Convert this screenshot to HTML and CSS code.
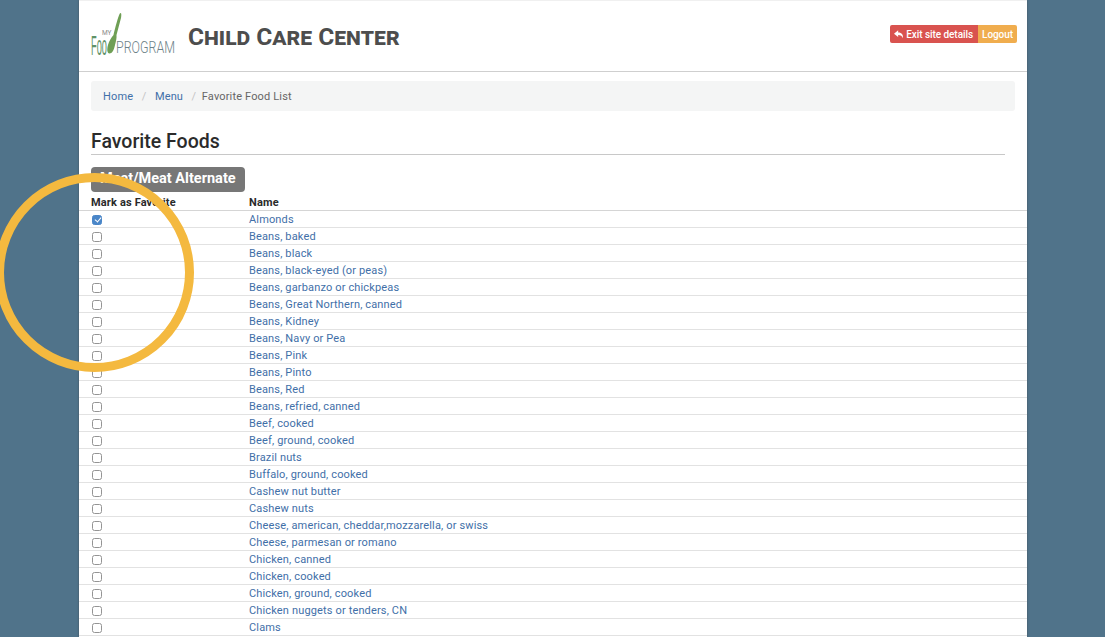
FILE: index.html
```html
<!DOCTYPE html>
<html lang="en">
<head>
<meta charset="utf-8">
<title>Favorite Foods</title>
<link rel="stylesheet" href="styles.css">
</head>
<body>
<div class="page">
  <header class="top">
    <div class="brand">
      <svg class="logo" viewBox="0 0 84 44" width="84" height="44" aria-hidden="true">
        <path class="spoon" d="M29.500 0 C30.500 0 30.500 2 30 5 L25.500 22 C25.800 25 25 28 24 32 C23 37 21 40.500 18.500 40.500 C16 40.500 15.800 36 17 32 C18 28 20 25 22.500 22 C24.500 14 28 0 29.500 0 Z"/>
        <text class="logo-my" transform="translate(11 22)">MY</text>
        <text class="logo-food" transform="translate(0 42) scale(.33 1)">Foo</text>
        <text class="logo-program" transform="translate(25 40) scale(.77 1)" textLength="76.600" lengthAdjust="spacingAndGlyphs">PROGRAM</text>
      </svg>
      <h1 class="site-title">Child Care Center</h1>
    </div>
    <div class="actions">
      <a class="btn btn-exit" href="#">
        <svg class="reply" viewBox="0 0 12 10" width="10" height="9" aria-hidden="true"><path d="M5 0 L0 4 L5 8 V5.500 C8 5.500 9.700 6.500 10.500 9.500 C11.500 5.500 9.500 2.500 5 2.500 Z"/></svg>
        Exit site details
      </a><a class="btn btn-logout" href="#">Logout</a>
    </div>
  </header>

  <nav class="crumbs">
    <a href="#">Home</a><span class="sep">/</span><a href="#">Menu</a><span class="sep">/</span><span class="current">Favorite Food List</span>
  </nav>

  <h2 class="section-title">Favorite Foods</h2>
  <span class="group-label">Meat/Meat Alternate</span>

  <table class="foods">
    <thead>
      <tr><th class="col-mark">Mark as Favorite</th><th>Name</th></tr>
    </thead>
    <tbody>
      <tr><td><input type="checkbox" checked></td><td><a href="#">Almonds</a></td></tr>
      <tr><td><input type="checkbox"></td><td><a href="#">Beans, baked</a></td></tr>
      <tr><td><input type="checkbox"></td><td><a href="#">Beans, black</a></td></tr>
      <tr><td><input type="checkbox"></td><td><a href="#">Beans, black-eyed (or peas)</a></td></tr>
      <tr><td><input type="checkbox"></td><td><a href="#">Beans, garbanzo or chickpeas</a></td></tr>
      <tr><td><input type="checkbox"></td><td><a href="#">Beans, Great Northern, canned</a></td></tr>
      <tr><td><input type="checkbox"></td><td><a href="#">Beans, Kidney</a></td></tr>
      <tr><td><input type="checkbox"></td><td><a href="#">Beans, Navy or Pea</a></td></tr>
      <tr><td><input type="checkbox"></td><td><a href="#">Beans, Pink</a></td></tr>
      <tr><td><input type="checkbox"></td><td><a href="#">Beans, Pinto</a></td></tr>
      <tr><td><input type="checkbox"></td><td><a href="#">Beans, Red</a></td></tr>
      <tr><td><input type="checkbox"></td><td><a href="#">Beans, refried, canned</a></td></tr>
      <tr><td><input type="checkbox"></td><td><a href="#">Beef, cooked</a></td></tr>
      <tr><td><input type="checkbox"></td><td><a href="#">Beef, ground, cooked</a></td></tr>
      <tr><td><input type="checkbox"></td><td><a href="#">Brazil nuts</a></td></tr>
      <tr><td><input type="checkbox"></td><td><a href="#">Buffalo, ground, cooked</a></td></tr>
      <tr><td><input type="checkbox"></td><td><a href="#">Cashew nut butter</a></td></tr>
      <tr><td><input type="checkbox"></td><td><a href="#">Cashew nuts</a></td></tr>
      <tr><td><input type="checkbox"></td><td><a href="#">Cheese, american, cheddar,mozzarella, or swiss</a></td></tr>
      <tr><td><input type="checkbox"></td><td><a href="#">Cheese, parmesan or romano</a></td></tr>
      <tr><td><input type="checkbox"></td><td><a href="#">Chicken, canned</a></td></tr>
      <tr><td><input type="checkbox"></td><td><a href="#">Chicken, cooked</a></td></tr>
      <tr><td><input type="checkbox"></td><td><a href="#">Chicken, ground, cooked</a></td></tr>
      <tr><td><input type="checkbox"></td><td><a href="#">Chicken nuggets or tenders, CN</a></td></tr>
      <tr><td><input type="checkbox"></td><td><a href="#">Clams</a></td></tr>
    </tbody>
  </table>
</div>
<div class="ring" aria-hidden="true"></div>
</body>
</html>
```

FILE: styles.css
```css
* { box-sizing: border-box; }
html, body { height: 100%; }
body {
  margin: 0;
  height: 637px;
  overflow: hidden;
  background: #50738a;
  font-family: Roboto, "Liberation Sans", sans-serif;
  font-size: 11px;
  letter-spacing: .15px;
  color: #333;
  position: relative;
}
a { color: #3f6fa8; text-decoration: none; }

.page {
  width: 948px;
  height: 637px;
  margin-left: 79px;
  background: #fff;
  overflow: hidden;
  box-shadow: 0 0 2px rgba(60, 60, 60, .6);
  border-top: 1px solid #f0f0f0;
}

.top {
  height: 71px;
  border-bottom: 1px solid #cfcfcf;
  display: flex;
  justify-content: space-between;
  padding: 12px 10px 0 12px;
}
.brand { display: flex; align-items: flex-start; }
.logo { display: block; overflow: visible; }
.spoon { fill: #6f9f55; }
.logo-my { font: 6.500px Roboto, sans-serif; fill: #8a8a8a; letter-spacing: 0; }
.logo-food { font: 28px "Liberation Sans", sans-serif; fill: #5f9268; letter-spacing: 0; }
.logo-program { font: 300 17px Roboto, sans-serif; fill: #6d8288; letter-spacing: 0; }
.site-title {
  margin: 6px 0 0 13px;
  font-size: 24.500px;
  line-height: 36px;
  font-weight: 700;
  font-variant: small-caps;
  letter-spacing: 0;
  color: #4d4d4d;
}
.actions { display: flex; align-items: flex-start; padding-top: 12px; }
.btn {
  display: inline-flex;
  align-items: center;
  gap: 2px;
  height: 18px;
  padding: 0 5px;
  color: #fff;
  font-size: 10px;
  font-weight: 500;
  letter-spacing: -.06px;
  white-space: nowrap;
}
.btn-exit { background: #d9534f; border-radius: 2px 0 0 2px; padding: 0 5px 0 4px; }
.btn-logout { background: #f0ad4e; border-radius: 0 2px 2px 0; padding: 0 4px; }
.reply { fill: #fff; }

.crumbs {
  margin: 9px 12px 0;
  height: 30px;
  padding: 0 12px;
  background: #f4f5f5;
  border-radius: 3px;
  display: flex;
  align-items: center;
  font-size: 11px;
}
.sep { color: #c4c4c4; padding: 0 8.500px; }
.current { color: #666; margin-left: -3px; }

.section-title {
  margin: 18px 22px 0 12px;
  height: 26px;
  padding-top: 1px;
  border-bottom: 1px solid #c8c8c8;
  font-size: 19.500px;
  line-height: 24px;
  font-weight: 500;
  letter-spacing: 0;
  color: #2b2b2b;
}
.group-label {
  display: table;
  margin: 12px 0 0 12px;
  height: 25px;
  padding: 0 9px;
  background: #777;
  border-radius: 4px;
  color: #fff;
  font-size: 14.500px;
  font-weight: 700;
  letter-spacing: 0;
  line-height: 23px;
}

.foods { width: 100%; border-collapse: collapse; margin-top: 1px; }
.foods th {
  height: 17px;
  padding: 3px 0 0;
  text-align: left;
  font-weight: 700;
  color: #2a2a2a;
  border-bottom: 1px solid #d5d5d5;
  line-height: 13px;
}
.foods td {
  height: 17px;
  padding: 1px 0 0;
  border-bottom: 1px solid #e2e2e2;
  line-height: 15px;
}
.foods th:first-child, .foods td:first-child { width: 170px; padding-left: 12px; }
.foods td:first-child { padding-top: 2px; }
.foods input {
  appearance: none;
  display: block;
  width: 10px;
  height: 10px;
  margin: 0 0 0 1px;
  border: 1px solid #949494;
  border-radius: 2.500px;
  background: #fff;
  position: relative;
}
.foods input:checked { background: #4a86c8; border-color: #4a86c8; }
.foods input:checked::after {
  content: "";
  position: absolute;
  left: 2.500px;
  top: .5px;
  width: 3px;
  height: 5px;
  border: solid #fff;
  border-width: 0 1px 1px 0;
  transform: rotate(40deg);
}

.ring {
  position: absolute;
  left: -5px;
  top: 173px;
  width: 199px;
  height: 199px;
  border: 9px solid #f4b93f;
  border-radius: 50%;
  pointer-events: none;
}
```
